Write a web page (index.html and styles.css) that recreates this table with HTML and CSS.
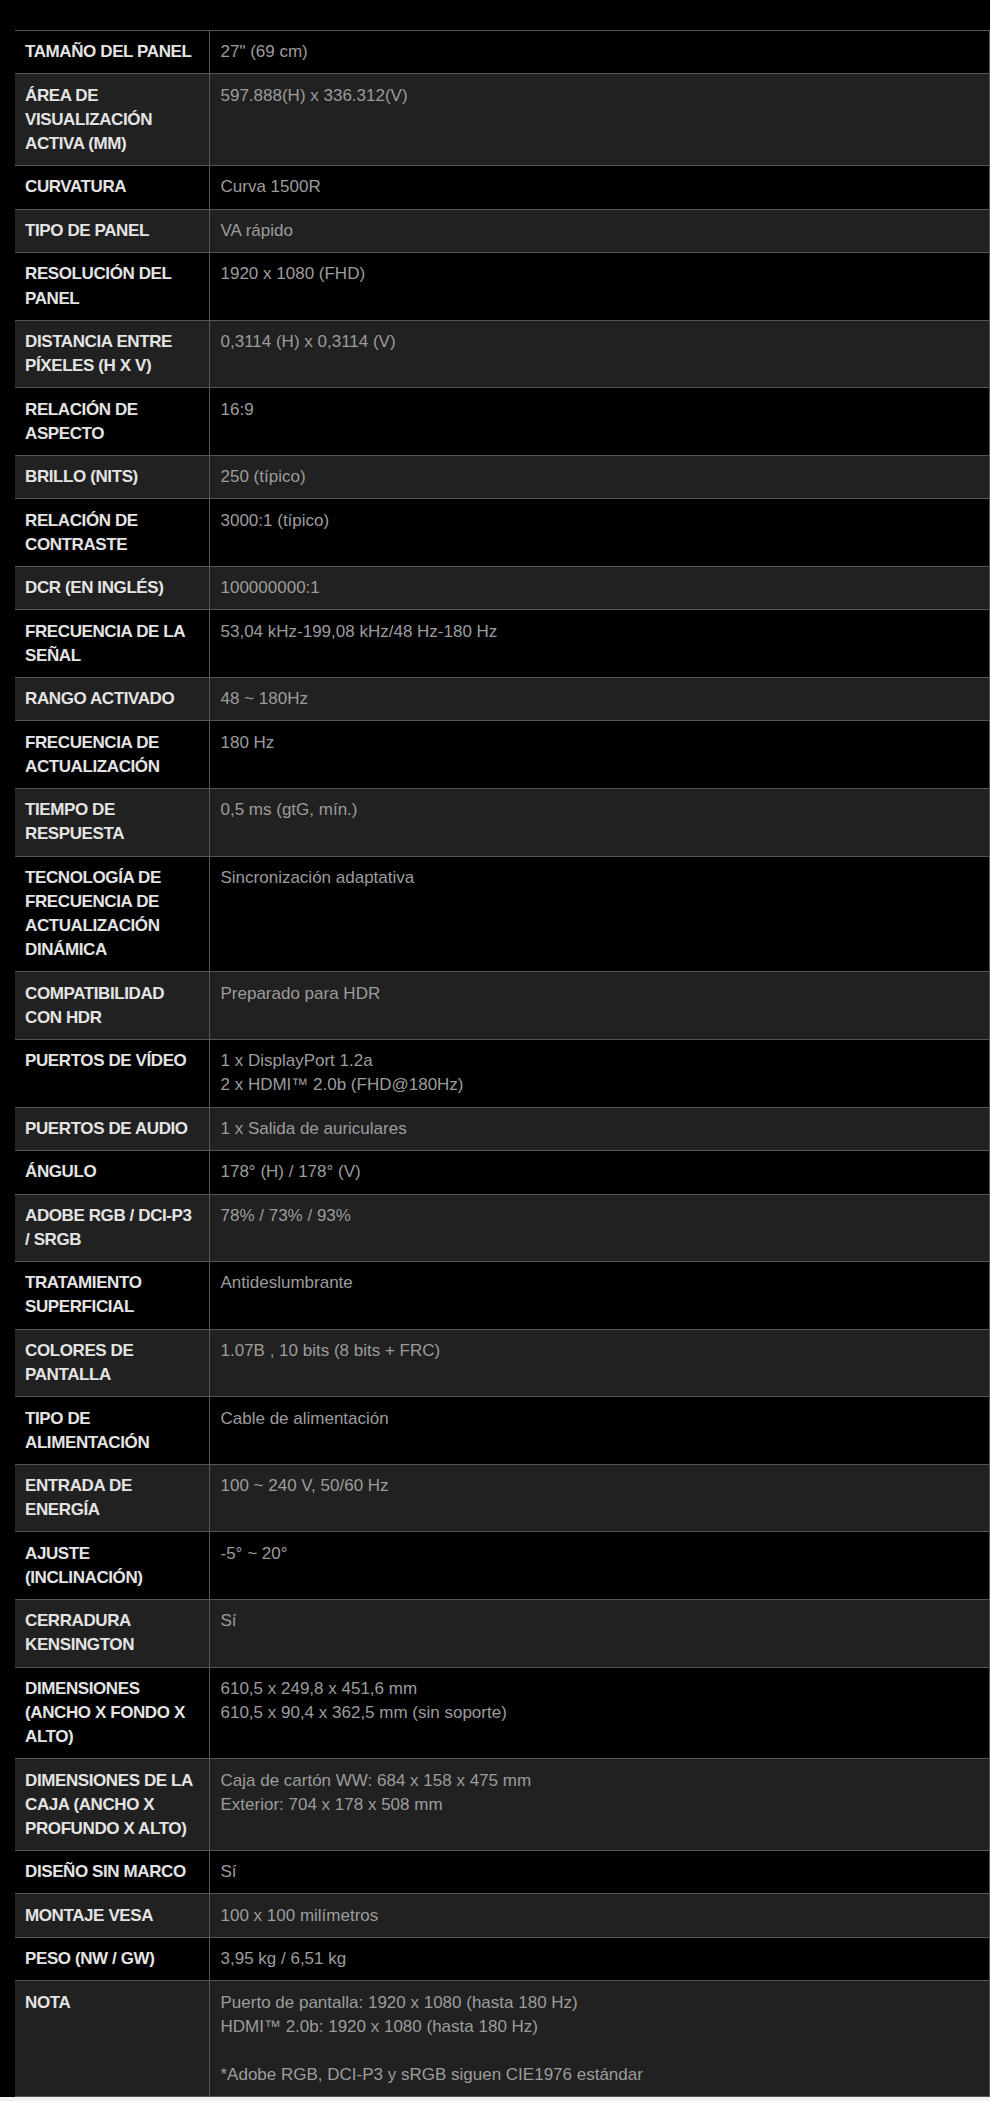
FILE: index.html
```html
<!DOCTYPE html>
<html lang="es">
<head>
  <meta charset="UTF-8" />
  <title>Especificaciones del monitor</title>
  <link rel="stylesheet" href="styles.css">
</head>
<body>
  <section class="specs">
    <table class="tabla-specs">
      <tbody>
        <tr><th>Tamaño del panel</th><td>27" (69 cm)</td></tr>
        <tr><th>Área de visualización activa (mm)</th><td>597.888(H) x 336.312(V)</td></tr>
        <tr><th>Curvatura</th><td>Curva 1500R</td></tr>
        <tr><th>Tipo de panel</th><td>VA rápido</td></tr>
        <tr><th>Resolución del panel</th><td>1920 x 1080 (FHD)</td></tr>
        <tr><th>Distancia entre píxeles (H x V)</th><td>0,3114 (H) x 0,3114 (V)</td></tr>
        <tr><th>Relación de aspecto</th><td>16:9</td></tr>
        <tr><th>Brillo (nits)</th><td>250 (típico)</td></tr>
        <tr><th>Relación de contraste</th><td>3000:1 (típico)</td></tr>
        <tr><th>DCR (en inglés)</th><td>100000000:1</td></tr>
        <tr><th>Frecuencia de la señal</th><td>53,04 kHz-199,08 kHz/48 Hz-180 Hz</td></tr>
        <tr><th>Rango activado</th><td>48 ~ 180Hz</td></tr>
        <tr><th>Frecuencia de actualización</th><td>180 Hz</td></tr>
        <tr><th>Tiempo de respuesta</th><td>0,5 ms (gtG, mín.)</td></tr>
        <tr><th>Tecnología de frecuencia de actualización dinámica</th><td>Sincronización adaptativa</td></tr>
        <tr><th>Compatibilidad con HDR</th><td>Preparado para HDR</td></tr>
        <tr><th>Puertos de vídeo</th><td>1 x DisplayPort 1.2a<br>2 x HDMI™ 2.0b (FHD@180Hz)</td></tr>
        <tr><th>Puertos de audio</th><td>1 x Salida de auriculares</td></tr>
        <tr><th>Ángulo</th><td>178° (H) / 178° (V)</td></tr>
        <tr><th>Adobe RGB / DCI-P3 / sRGB</th><td>78% / 73% / 93%</td></tr>
        <tr><th>Tratamiento superficial</th><td>Antideslumbrante</td></tr>
        <tr><th>Colores de pantalla</th><td>1.07B , 10 bits (8 bits + FRC)</td></tr>
        <tr><th>Tipo de alimentación</th><td>Cable de alimentación</td></tr>
        <tr><th>Entrada de energía</th><td>100 ~ 240 V, 50/60 Hz</td></tr>
        <tr><th>Ajuste (inclinación)</th><td>-5° ~ 20°</td></tr>
        <tr><th>Cerradura Kensington</th><td>Sí</td></tr>
        <tr><th>Dimensiones (ancho x fondo x alto)</th><td>610,5 x 249,8 x 451,6 mm<br>610,5 x 90,4 x 362,5 mm (sin soporte)</td></tr>
        <tr><th>Dimensiones de la caja (ancho x profundo x alto)</th><td>Caja de cartón WW: 684 x 158 x 475 mm<br>Exterior: 704 x 178 x 508 mm</td></tr>
        <tr><th>Diseño sin marco</th><td>Sí</td></tr>
        <tr><th>Montaje VESA</th><td>100 x 100 milímetros</td></tr>
        <tr><th>Peso (NW / GW)</th><td>3,95 kg / 6,51 kg</td></tr>
        <tr><th>Nota</th><td>Puerto de pantalla: 1920 x 1080 (hasta 180 Hz)<br>HDMI™ 2.0b: 1920 x 1080 (hasta 180 Hz)<br><br>*Adobe RGB, DCI-P3 y sRGB siguen CIE1976 estándar</td></tr>
      </tbody>
    </table>
  </section>
</body>
</html>
```

FILE: styles.css
```css
* {
  margin: 0;
  padding: 0;
  box-sizing: border-box;
}

body {
  font-family: "Liberation Sans", Arial, sans-serif;
  font-size: 17px;
  background: #f1f1f1;
}

.specs {
  background: #000;
  padding: 30px 0 0 15px;
}

.tabla-specs {
  width: 975px;
  border-collapse: collapse;
  table-layout: fixed;
  line-height: 24.1px;
}

.tabla-specs tr:nth-child(odd) {
  background: #000;
}

.tabla-specs tr:nth-child(even) {
  background: #212121;
}

.tabla-specs th,
.tabla-specs td {
  vertical-align: top;
  text-align: left;
  border-top: 1px solid #555;
  border-bottom: 1px solid #555;
}

.tabla-specs th {
  width: 194px;
  padding: 9.3px 11px 9.1px 10px;
  color: #e4e4e4;
  font-weight: bold;
  letter-spacing: -0.4px;
  text-transform: uppercase;
  border-right: 1px solid #555;
}

.tabla-specs td {
  padding: 9.3px 11px 9.1px 11px;
  color: #9c9c9c;
  border-right: 1px solid #555;
}
```
